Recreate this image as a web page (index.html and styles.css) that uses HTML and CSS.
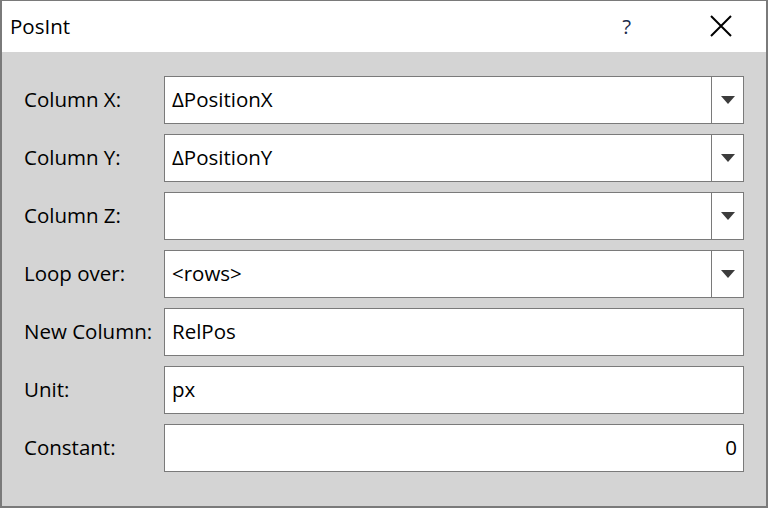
FILE: index.html
```html
<!DOCTYPE html>
<html>
<head>
<meta charset="utf-8">
<link rel="stylesheet" href="styles.css">
</head>
<body>
<div class="window">
  <div class="titlebar">
    <span class="title">PosInt</span>
    <span class="help">?</span>
    <span class="close"><svg width="22" height="22" viewBox="0 0 22 22"><path d="M1 1 L21 21 M21 1 L1 21" stroke="#000" stroke-width="2" fill="none"/></svg></span>
  </div>
  <div class="content">
    <div class="row"><label class="lbl">Column X:</label><div class="field combo"><span class="val">ΔPositionX</span><span class="btn"><span class="arrow"></span></span></div></div>
    <div class="row"><label class="lbl">Column Y:</label><div class="field combo"><span class="val">ΔPositionY</span><span class="btn"><span class="arrow"></span></span></div></div>
    <div class="row"><label class="lbl">Column Z:</label><div class="field combo"><span class="val"></span><span class="btn"><span class="arrow"></span></span></div></div>
    <div class="row"><label class="lbl">Loop over:</label><div class="field combo"><span class="val">&lt;rows&gt;</span><span class="btn"><span class="arrow"></span></span></div></div>
    <div class="row"><label class="lbl">New Column:</label><div class="field"><span class="val">RelPos</span></div></div>
    <div class="row"><label class="lbl">Unit:</label><div class="field"><span class="val">px</span></div></div>
    <div class="row"><label class="lbl">Constant:</label><div class="field num"><span class="val">0</span></div></div>
  </div>
</div>
</body>
</html>
```
FILE: styles.css
```css
html, body {
  margin: 0;
  padding: 0;
}
body {
  width: 768px;
  height: 508px;
  font-family: "Open Sans", "Noto Sans", sans-serif;
  font-size: 20.5px;
  color: #000;
}
.window {
  box-sizing: border-box;
  width: 768px;
  height: 508px;
  border: 2px solid #7a7a7a;
  border-top-width: 1px;
  background: #d4d4d4;
  display: flex;
  flex-direction: column;
}
.titlebar {
  height: 51px;
  background: #fff;
  display: flex;
  align-items: center;
  flex-shrink: 0;
}
.title {
  margin-left: 8px;
  flex: 1;
  padding-bottom: 2px;
}
.help {
  color: #1a2a4a;
  margin-right: 79px;
  padding-bottom: 2px;
}
.close {
  display: flex;
  margin-right: 34px;
  padding-bottom: 2px;
}
.content {
  padding: 24px 22px 0 22px;
  display: flex;
  flex-direction: column;
  gap: 10px;
}
.row {
  display: flex;
  align-items: center;
  height: 48px;
}
.lbl {
  width: 140px;
  padding-bottom: 2px;
}
.field {
  box-sizing: border-box;
  width: 580px;
  height: 48px;
  background: #fff;
  border: 1px solid #7a7a7a;
  display: flex;
  align-items: stretch;
}
.val {
  flex: 1;
  display: flex;
  align-items: center;
  padding-left: 7px;
  padding-bottom: 2px;
}
.num .val {
  justify-content: flex-end;
  padding-right: 6px;
}
.btn {
  width: 31px;
  border-left: 1px solid #7a7a7a;
  display: flex;
  align-items: center;
  justify-content: center;
}
.arrow {
  width: 0;
  height: 0;
  border-left: 7px solid transparent;
  border-right: 7px solid transparent;
  border-top: 8px solid #3c3c3c;
}
```
